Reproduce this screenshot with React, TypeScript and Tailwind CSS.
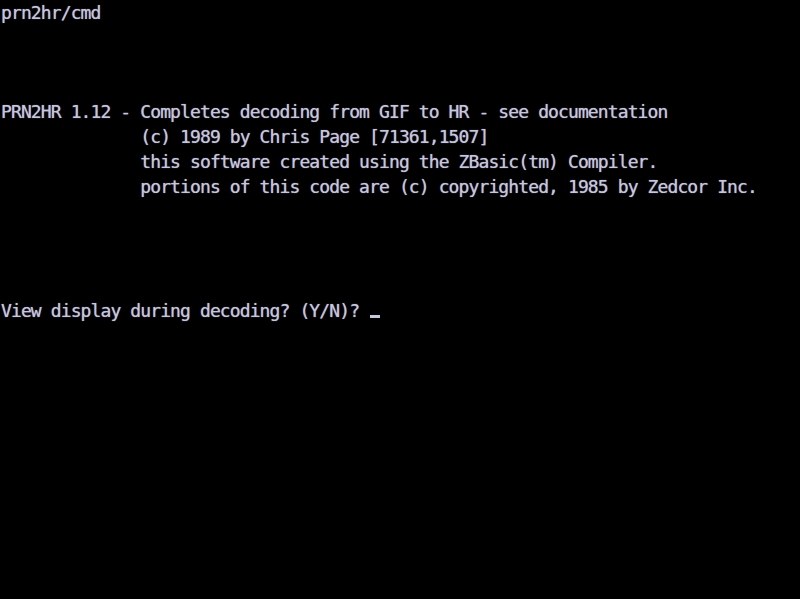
import React from "react";

const rows: string[] = [
  "prn2hr/cmd",
  "",
  "",
  "",
  "PRN2HR 1.12 - Completes decoding from GIF to HR - see documentation",
  "              (c) 1989 by Chris Page [71361,1507]",
  "              this software created using the ZBasic(tm) Compiler.",
  "              portions of this code are (c) copyrighted, 1985 by Zedcor Inc.",
  "",
  "",
  "",
  "",
];

export default function App() {
  return (
    <div className="w-[800px] h-[599px] bg-black overflow-hidden pl-px text-[#c6c6de] text-[18px] tracking-[-0.89px] font-['DejaVu_Sans_Mono',monospace] [text-shadow:0_0_1px_#9a9ab4]">
      {rows.map((line, i) => (
        <div key={i} className="h-[24.8px] leading-[25px] whitespace-pre">
          {line}
        </div>
      ))}
      {/* Prompt line with cursor */}
      <div className="h-[24.8px] leading-[25px] whitespace-pre flex items-start">
        <span>View display during decoding? (Y/N)? </span>
        <span className="inline-block w-[10px] h-[3px] mt-[17px] ml-[1px] bg-[#c6c6de]" />
      </div>
    </div>
  );
}
